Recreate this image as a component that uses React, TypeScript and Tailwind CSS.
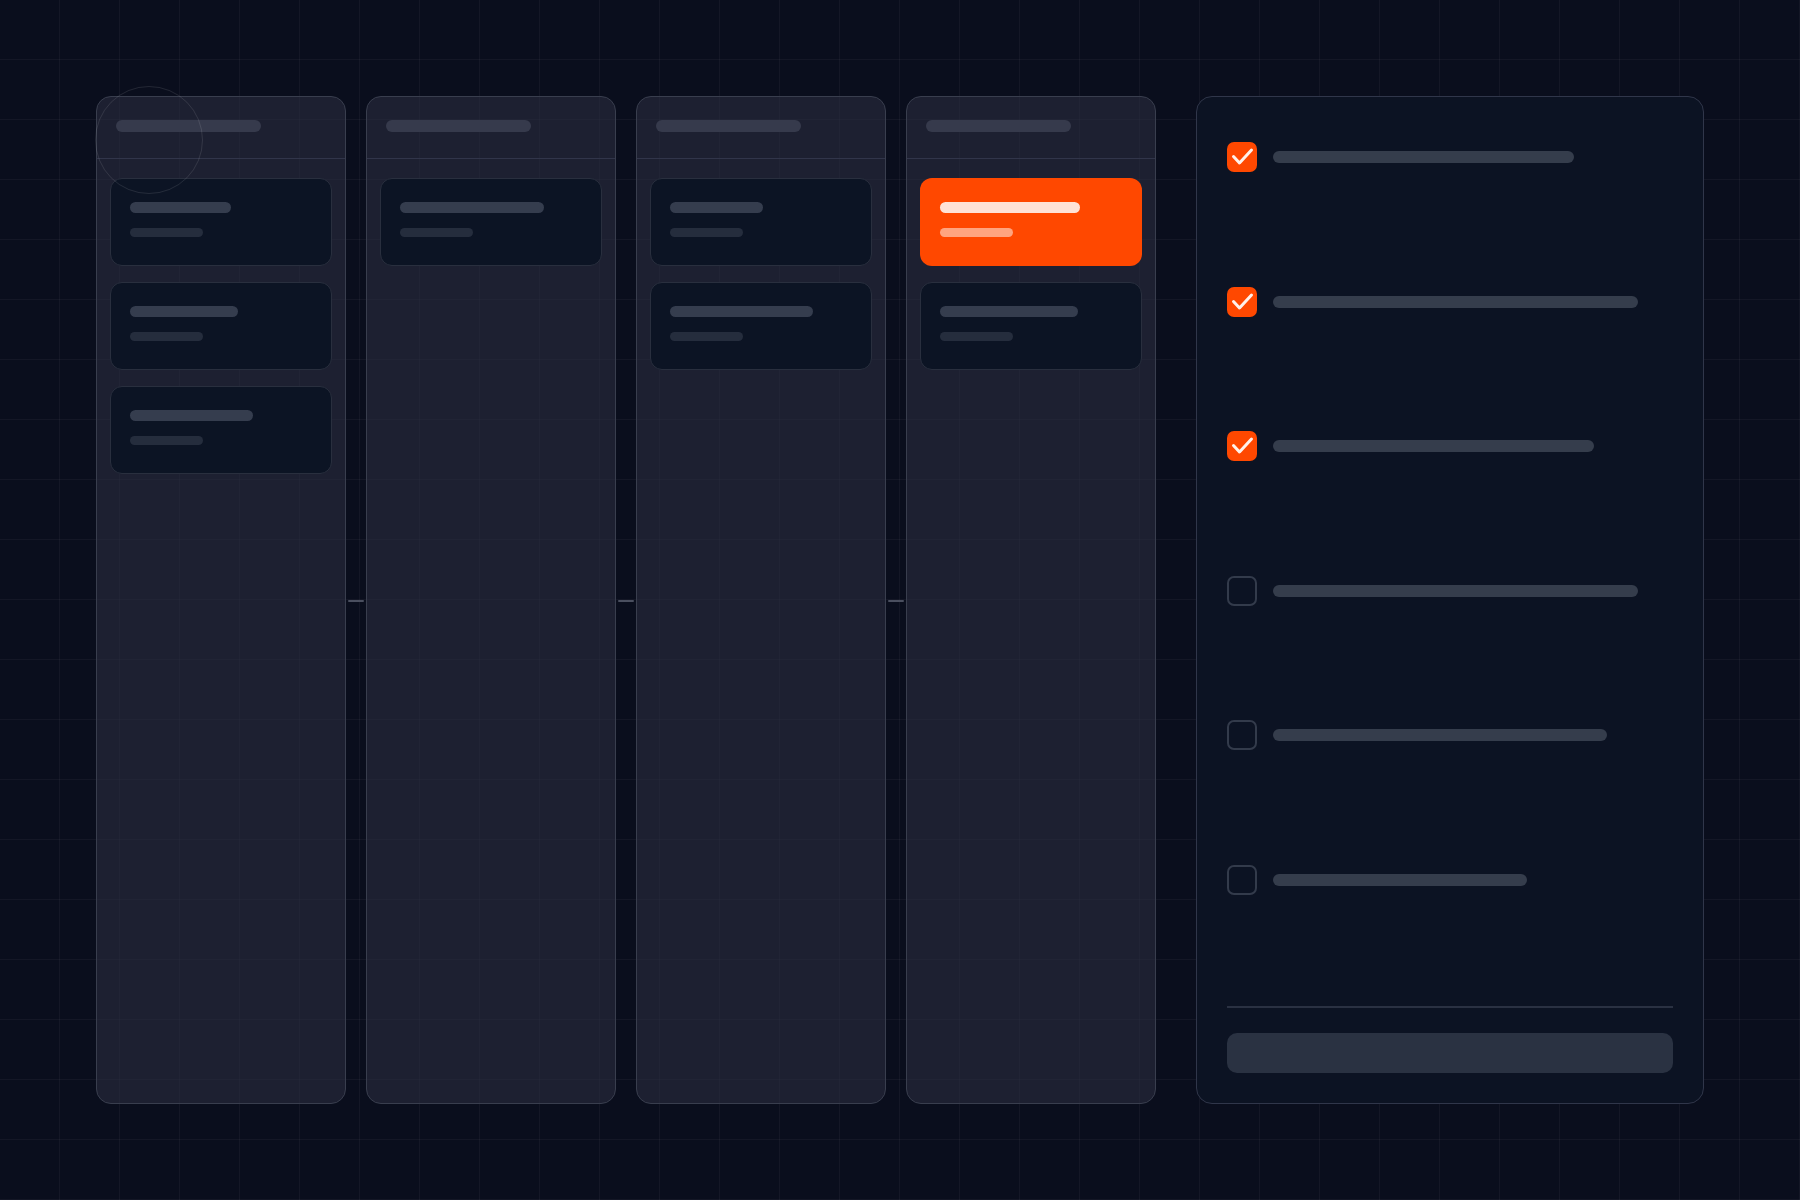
import { Fragment } from "react";

type Card = {
  title: number; // width of the title bar
  sub: number; // width of the subtitle bar
  active?: boolean;
};

type Column = {
  cards: Card[];
};

const COLUMNS: Column[] = [
  { cards: [{ title: 101, sub: 73 }, { title: 108, sub: 73 }, { title: 123, sub: 73 }] },
  { cards: [{ title: 144, sub: 73 }] },
  { cards: [{ title: 93, sub: 73 }, { title: 143, sub: 73 }] },
  { cards: [{ title: 140, sub: 73, active: true }, { title: 138, sub: 73 }] },
];

const TASKS = [
  { w: 301, done: true },
  { w: 365, done: true },
  { w: 321, done: true },
  { w: 365, done: false },
  { w: 334, done: false },
  { w: 254, done: false },
];

function Check({ done }: { done: boolean }) {
  if (!done) {
    return <div className="h-[30px] w-[30px] shrink-0 rounded-[7px] border-2 border-[#333b4b]" />;
  }
  return (
    <div className="h-[30px] w-[30px] shrink-0 rounded-[7px] bg-[#ff4800]">
      <svg viewBox="0 0 30 30" className="h-full w-full">
        <path
          d="M6.5 14.5 L12.5 21 L24.5 8"
          fill="none"
          stroke="#fff1ea"
          strokeWidth="3"
          strokeLinecap="round"
          strokeLinejoin="round"
        />
      </svg>
    </div>
  );
}

export default function App() {
  return (
    <div className="min-h-screen w-full bg-[#0a0e1d] bg-[linear-gradient(rgba(255,255,255,0.04)_1px,transparent_1px),linear-gradient(90deg,rgba(255,255,255,0.04)_1px,transparent_1px)] bg-[size:60px_60px] bg-[position:-1px_-1px]">
      <div className="flex h-[1200px] gap-[40px] p-[96px]">
        {/* Board columns */}
        <div className="flex gap-[20px]">
          {COLUMNS.map((col, i) => (
            <Fragment key={i}>
              <div className="relative flex w-[250px] flex-col rounded-[15px] border border-[#393e4e] bg-[#2a2d40]/60">
                {i === 0 && (
                  <div className="pointer-events-none absolute left-[-2px] top-[-11px] h-[108px] w-[108px] rounded-full border border-white/10" />
                )}
                {i < COLUMNS.length - 1 && (
                  <div className="absolute right-[-19px] top-1/2 h-[2px] w-[16px] rounded-full bg-[#4a4f5f]" />
                )}
                <div className="h-[62px] border-b border-[#31354a] px-[19px] pt-[23px]">
                  <div className="h-[12px] w-[145px] rounded-full bg-[#363a4c]" />
                </div>
                <div className="flex flex-col gap-[16px] px-[13px] pt-[19px]">
                  {col.cards.map((c, j) => (
                    <div
                      key={j}
                      className={
                        c.active
                          ? "h-[88px] rounded-[12px] bg-[#ff4800] px-[20px] pt-[24px]"
                          : "h-[88px] rounded-[12px] border border-[#292f3e] bg-[#0c1424] px-[19px] pt-[23px]"
                      }
                    >
                      <div
                        className={`h-[11px] rounded-full ${c.active ? "bg-[#ffe2d6]" : "bg-[#353d4e]"}`}
                        style={{ width: c.title }}
                      />
                      <div
                        className={`mt-[15px] h-[9px] rounded-full ${c.active ? "bg-[#ffa47f]" : "bg-[#252d3d]"}`}
                        style={{ width: c.sub }}
                      />
                    </div>
                  ))}
                </div>
              </div>
            </Fragment>
          ))}
        </div>

        {/* Checklist panel */}
        <div className="flex flex-1 flex-col rounded-[16px] border border-[#30364a] bg-[#0c1323] px-[30px] pb-[30px] pt-[45px]">
          <div className="flex flex-col gap-[114.5px]">
            {TASKS.map((t, i) => (
              <div key={i} className="flex items-center gap-[16px]">
                <Check done={t.done} />
                <div className="h-[12px] rounded-full bg-[#353d4c]" style={{ width: t.w }} />
              </div>
            ))}
          </div>
          <div className="mt-auto border-t-2 border-[#2a3142]" />
          <div className="mt-[25px] h-[40px] rounded-[10px] bg-[#2a3242]" />
        </div>
      </div>
    </div>
  );
}
